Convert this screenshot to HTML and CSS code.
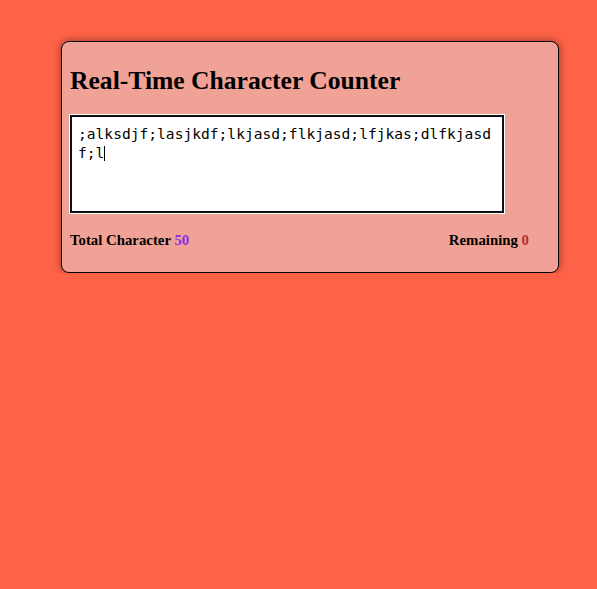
FILE: index.html
```html
<!DOCTYPE html>
<html lang="en">
<head>
<meta charset="utf-8">
<title>Real-Time Character Counter</title>
<link rel="stylesheet" href="styles.css">
</head>
<body>
<div class="page">
  <div class="card">
    <h2 class="title">Real-Time Character Counter</h2>
    <div class="input" role="textbox" aria-multiline="true">;alksdjf;lasjkdf;lkjasd;flkjasd;lfjkas;dlfkjasdf;l<span class="caret"></span></div>
    <div class="stats">
      <span class="stat">Total Character <span class="total">50</span></span>
      <span class="stat">Remaining <span class="remaining">0</span></span>
    </div>
  </div>
</div>
</body>
</html>
```

FILE: styles.css
```css
html, body {
  margin: 0;
  padding: 0;
  background: #ff6347;
  min-height: 100%;
}
body {
  font-family: "Liberation Serif", "Times New Roman", serif;
}
.page {
  padding: 41px 0 0 61px;
}
.card {
  box-sizing: border-box;
  width: 498px;
  background: #f1a296;
  border: 1px solid #000;
  border-radius: 8px;
  padding: 8px 8px 23px 8px;
  box-shadow: 0 0 8px rgba(0, 0, 0, 0.45);
}
.title {
  margin: 16px 0 20px 0;
  font-size: 25.6px;
  line-height: 29px;
  font-weight: bold;
  color: #000;
}
.input {
  box-sizing: border-box;
  width: 434px;
  height: 98px;
  background: #fff;
  border: 2px solid #101010;
  outline: 1px solid #fff;
  padding: 8px 6px;
  font-family: "DejaVu Sans Mono", monospace;
  font-size: 14.6px;
  line-height: 18.7px;
  color: #000;
  word-break: break-all;
  overflow-wrap: anywhere;
  white-space: pre-wrap;
}
.caret {
  display: inline-block;
  width: 0;
  height: 15px;
  border-left: 1px solid #000;
  vertical-align: -3px;
}
.stats {
  display: flex;
  justify-content: space-between;
  margin-top: 19px;
  padding-right: 21px;
  font-size: 14.8px;
  line-height: 16.6px;
  font-weight: bold;
  color: #000;
}
.total {
  color: #8a2be2;
}
.remaining {
  color: #b2302b;
}
```
